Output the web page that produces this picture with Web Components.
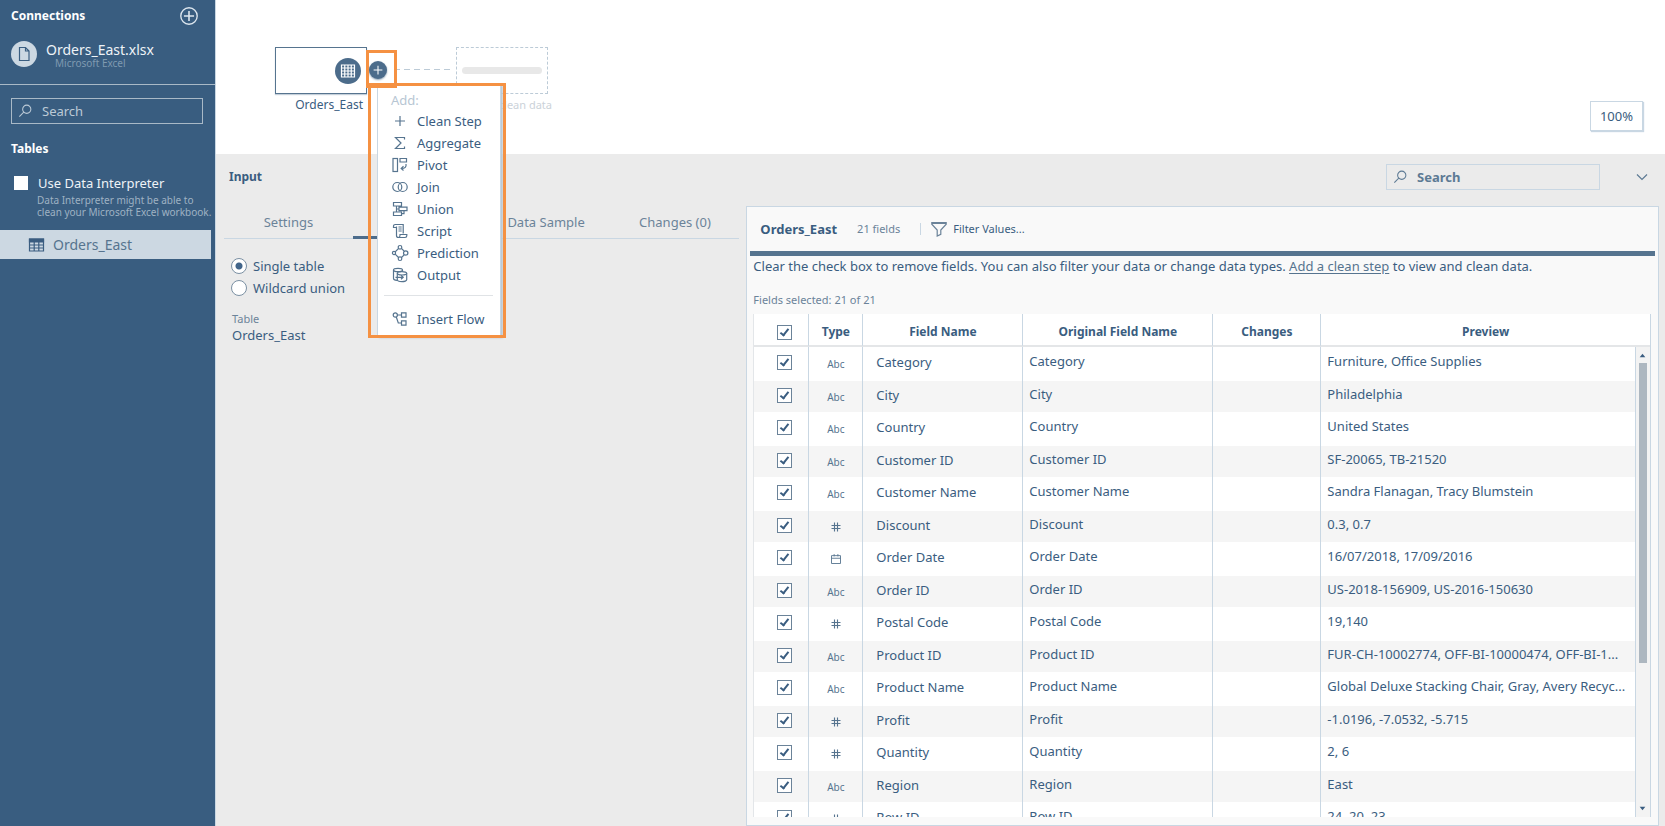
<!DOCTYPE html>
<html lang="en">
<head>
<meta charset="utf-8">
<title>Prep Builder - Orders_East</title>
<style>
  :root {
    --navy: #395d80;
    --ink: #3a5d80;
    --soft: #6b8399;
    --faint: #b7c6d3;
    --line: #c9d7e3;
    --pane: #ebebeb;
    --callout: #f59142;
  }
  html, body { height: 100%; }
  body {
    margin: 0;
    font: 13px/18px "Noto Sans", "Open Sans", sans-serif;
    color: var(--ink);
    overflow: hidden;
  }
</style>
</head>
<body>
<prep-app></prep-app>

<script>
const define = (name, html, setup) => {
  const template = document.createElement('template');
  template.innerHTML = html;
  customElements.define(name, class extends HTMLElement {
    constructor() {
      super();
      this.attachShadow({ mode: 'open' }).append(template.content.cloneNode(true));
    }
    connectedCallback() { if (setup) setup(this, this.shadowRoot); }
  });
};

const ICONS = {
  plus: '<path d="M8 3v10M3 8h10"/>',
  circlePlus: '<circle cx="8" cy="8" r="7.3"/><path d="M8 3.500v9M3.500 8h9" stroke-width="1.400"/>',
  sigma: '<path d="M12.500 4.500V2.500h-9L9 8l-5.500 5.500h9v-2"/>',
  pivot: '<rect x="1" y="1.500" width="4.500" height="13"/><path d="M8 1.500h6.500v3.500H8z"/><path d="M14 7c.6 3-1 4.500-4.500 4.500M11.500 9.300L9.200 11.500l2.300 2"/>',
  join: '<circle cx="5.300" cy="8" r="4.500"/><circle cx="10.700" cy="8" r="4.500"/>',
  union: '<path d="M1.500 1.500h8V5h-8zM7 6.200h8v3.500H7zM1.500 11h8v3.500h-8zM4.500 5v6M4.500 8H7M9.500 12.700H12v-3"/>',
  script: '<path d="M4.500 4.500H1.500v-1C1.500 2 2.300 1.500 3.200 1.500h8v9M4.500 3.500v9c0 1.300.8 2 1.800 2h6.700c1 0 1.800-.7 1.800-1.700v-1.300H8v1c0 1.200-.7 2-1.700 2M6.500 4h3.200M6.500 6h3.200M6.500 8h3.200"/>',
  prediction: '<circle cx="8" cy="2.300" r="1.800"/><circle cx="2" cy="8" r="1.600"/><circle cx="13.700" cy="8" r="2.200"/><circle cx="8" cy="13.700" r="1.800"/><path d="M6.500 3.500L3.200 6.800M9.500 3.500l2.700 2.700M3.200 9.200l3.300 3.300M12.200 9.800l-2.700 2.700"/>',
  output: '<ellipse cx="6" cy="3" rx="4.500" ry="1.700"/><path d="M1.500 3v8.500c0 .9 1.500 1.700 3.500 1.800M10.500 3v1.500"/><ellipse cx="10" cy="6.300" rx="4.700" ry="1.700"/><path d="M5.300 6.300v6.500c0 1 2 1.800 4.700 1.800s4.700-.8 4.700-1.800V6.300M3.500 10.300H11M9 8.300l2.200 2L9 12.300"/>',
  insert: '<circle cx="3.300" cy="4" r="2.100"/><path d="M9.500 1.800H14v4.400H9.500zM9.500 9.800H14v4.400H9.500zM5.500 4h4M4.300 6l2 6h3.200"/>',
  search: '<circle cx="10" cy="6" r="4.700"/><path d="M6.600 9.400L1.500 14.500"/>',
  file: '<path d="M3.500 1.500h6L13 5v9.500H3.500zM9.500 1.500V5H13"/>',
  grid: '<path d="M1.500 2h13v12h-13zM1.500 5h13M1.500 8h13M1.500 11h13M4.750 2v12M8 2v12M11.250 2v12"/>',
  sheet: '<path d="M1 2h14v12H1zM1 8h14M1 11h14M5.700 5v9M10.300 5v9"/><path d="M1 2h14v3H1z" fill="currentColor"/>',
  filter: '<path d="M.8 1.500h14.400v1.700L9.800 9v4.300L6.200 15V9L.8 3.200z"/><path d="M1 2.400h14"/>',
  chevron: '<path d="M3 5.500l5 5 5-5"/>',
  hash: '<path d="M6 2v12M10 2v12M2 6h12M2 10h12" stroke-width="1.500"/>',
  calendar: '<path d="M2 3.500h12V14H2zM2 7h12M5.500 1.500v3M10.500 1.500v3"/>',
  up: '<path d="M3 11l5-6 5 6z" fill="currentColor" stroke="none"/>',
  down: '<path d="M3 5l5 6 5-6z" fill="currentColor" stroke="none"/>'
};

define('prep-icon', `
  <style>
    :host { display: block; flex: none; width: 16px; height: 16px; }
    svg { display: block; width: 100%; height: 100%; overflow: visible; fill: none; stroke: currentColor; stroke-width: 1.2; }
  </style>
  <svg viewBox="0 0 16 16" aria-hidden="true"></svg>`,
  (host, root) => { root.querySelector('svg').innerHTML = ICONS[host.getAttribute('name')]; });

define('search-box', `
  <style>
    :host { display: flex; align-items: center; box-sizing: border-box; height: 26px; padding: 0 6px; gap: 10px; border: 1px solid var(--line); color: var(--soft); }
    prep-icon { width: 14px; height: 14px; }
    input { flex: 1; min-width: 0; border: 0; padding: 0; background: none; outline: 0; color: inherit; font: inherit; font-weight: inherit; }
    input::placeholder { color: inherit; opacity: 1; }
  </style>
  <prep-icon name="search"></prep-icon>
  <input type="search" placeholder="Search" aria-label="Search">`);

define('prep-sidebar', `
  <style>
    :host { display: flex; flex-direction: column; background: var(--navy); color: #fff; box-shadow: 1px 0 var(--line); z-index: 2; }
    h2 { margin: 0; font-size: 12px; line-height: 18px; }
    header { display: flex; align-items: center; justify-content: space-between; height: 32px; padding: 0 17px 0 11px; }
    button { border: 0; padding: 0; background: none; color: #dde6ee; }
    header prep-icon { width: 18px; height: 18px; }
    .source { display: flex; gap: 9px; height: 43px; margin-top: 9px; padding-left: 11px; border-bottom: 1px solid #a9b9c7; }
    .badge { display: grid; place-items: center; width: 26px; height: 26px; border-radius: 50%; background: #ccd8e2; color: var(--navy); }
    .name { padding-top: 1px; font-size: 14px; line-height: 16px; color: #eef3f7; }
    .kind { padding-left: 9px; font-size: 10px; line-height: 10px; color: #7f9ab0; }
    search-box { margin: 13px 12px 0 11px; border: 1px solid #a9b9c7; color: #bccad6; }
    .tables { margin: 16px 11px 0; }
    label { display: flex; align-items: center; gap: 10px; margin: 16px 0 0 14px; color: #eef3f7; }
    input { appearance: none; width: 14px; height: 14px; margin: 0; background: #fff; }
    p { margin: 2px 0 0 37px; font-size: 10px; line-height: 12px; color: #9fb2c3; white-space: nowrap; }
    a { display: flex; align-items: center; gap: 8px; height: 29px; margin: 12px 4px 0 0; padding-left: 28px; background: #ccd8e2; color: #56748f; text-decoration: none; font-size: 14px; }
    a prep-icon { width: 17px; height: 16px; color: var(--ink); }
  </style>
  <header><h2>Connections</h2><button aria-label="Add connection"><prep-icon name="circlePlus"></prep-icon></button></header>
  <div class="source">
    <div class="badge"><prep-icon name="file"></prep-icon></div>
    <div><div class="name">Orders_East.xlsx</div><div class="kind">Microsoft Excel</div></div>
  </div>
  <search-box></search-box>
  <h2 class="tables">Tables</h2>
  <label><input type="checkbox">Use Data Interpreter</label>
  <p>Data Interpreter might be able to<br>clean your Microsoft Excel workbook.</p>
  <a href="#orders"><prep-icon name="sheet"></prep-icon>Orders_East</a>`);

define('menu-item', `
  <style>
    :host { display: block; }
    button { display: flex; align-items: center; gap: 9px; width: 100%; height: 22px; padding: 0 0 0 14px; border: 0; background: none; color: var(--ink); font: inherit; white-space: nowrap; }
    prep-icon { color: #56748f; }
  </style>
  <button role="menuitem"><prep-icon></prep-icon><slot></slot></button>`,
  (host, root) => {
    const icon = document.createElement('prep-icon');
    icon.setAttribute('name', host.getAttribute('icon'));
    root.querySelector('prep-icon').replaceWith(icon);
  });
</script>
<script>
define('add-menu', `
  <style>
    :host { display: block; box-sizing: border-box; padding: 6px 0 6px; background: #fff; border: 1px solid var(--line); border-top: 0; box-shadow: 2px 1px 2px #b9c8d5; }
    .title { padding-left: 13px; line-height: 20px; color: var(--faint); }
    hr { margin: 9px 7px 12px 6px; border: 0; border-top: 1px solid #e0e3e6; }
  </style>
  <div class="title">Add:</div>
  <menu-item icon="plus">Clean Step</menu-item>
  <menu-item icon="sigma">Aggregate</menu-item>
  <menu-item icon="pivot">Pivot</menu-item>
  <menu-item icon="join">Join</menu-item>
  <menu-item icon="union">Union</menu-item>
  <menu-item icon="script">Script</menu-item>
  <menu-item icon="prediction">Prediction</menu-item>
  <menu-item icon="output">Output</menu-item>
  <hr>
  <menu-item icon="insert">Insert Flow</menu-item>`);

define('flow-canvas', `
  <style>
    :host { display: block; position: relative; z-index: 1; background: #fff; }
    .node, .label, .add, .link, add-menu, .callout, .zoom { position: absolute; box-sizing: border-box; }
    .node { top: 47px; width: 92px; height: 47px; display: flex; align-items: center; }
    .orders { left: 60px; border: 1px solid #56748f; justify-content: flex-end; padding-right: 5px; box-shadow: 0 1px 1px #c5d0da; }
    .disc { display: grid; place-items: center; width: 26px; height: 26px; border-radius: 50%; background: #4c6c8b; color: #fff; }
    .ghost { left: 241px; border: 1px dashed #bccbd7; padding: 0 5px; }
    .ghost i { flex: 1; height: 7px; border-radius: 4px; background: #e8e8e8; }
    .label { top: 96px; width: 100px; font-size: 12px; text-align: right; }
    .orders-label { left: 48px; }
    .ghost-label { left: 237px; font-size: 11px; color: #cbd2d9; }
    .add { left: 154px; top: 61px; width: 18px; height: 18px; border: 0; padding: 2px; border-radius: 50%; background: #4c6c8b; color: #fff; box-shadow: 0 1px 2px #8aa0b3; }
    .add prep-icon { width: 14px; height: 14px; }
    .link { left: 179px; top: 69px; width: 56px; height: 1px; background: repeating-linear-gradient(90deg, #bccbd7 0 6px, transparent 6px 10px); }
    add-menu { left: 162px; top: 84px; width: 124px; }
    .callout { border: 3px solid var(--callout); pointer-events: none; }
    .c1 { left: 151px; top: 50px; width: 31px; height: 38px; }
    .c2 { left: 153px; top: 83px; width: 138px; height: 255px; }
    .zoom { right: 22px; top: 101px; width: 53px; height: 30px; padding: 0; border: 1px solid var(--line); background: #fff; box-shadow: 1px 1px 1px #c9d7e3; color: var(--ink); font: inherit; }
  </style>
  <div class="node orders"><div class="disc"><prep-icon name="grid"></prep-icon></div></div>
  <div class="label orders-label">Orders_East</div>
  <div class="link"></div>
  <div class="node ghost"><i></i></div>
  <div class="label ghost-label">clean data</div>
  <button class="zoom">100%</button>
  <add-menu role="menu"></add-menu>
  <button class="add" aria-label="Add step"><prep-icon name="plus"></prep-icon></button>
  <div class="callout c2"></div>
  <div class="callout c1"></div>`);

define('input-settings', `
  <style>
    :host { display: block; }
    nav { display: grid; grid-template-columns: repeat(4, 1fr); height: 32px; border-bottom: 1px solid var(--line); }
    button { border: 0; padding: 0; background: none; color: var(--soft); font: inherit; line-height: 32px; }
    .active { margin-bottom: -1px; border-bottom: 3px solid #4c6c8b; }
    fieldset { margin: 16px 0 0 7px; padding: 0; border: 0; }
    label { display: flex; align-items: center; gap: 6px; height: 22px; }
    input { appearance: none; box-sizing: border-box; width: 16px; height: 16px; margin: 0; border: 1px solid #7b90a3; border-radius: 50%; background: #fff; }
    input:checked { background: radial-gradient(circle, #42658a 0 3px, #fff 4px); }
    dl { margin: 13px 0 0 8px; }
    dt { font-size: 11px; line-height: 14px; color: var(--soft); }
    dd { margin: 0; }
  </style>
  <nav role="tablist">
    <button role="tab">Settings</button>
    <button role="tab" class="active" aria-selected="true" aria-label="Tables"></button>
    <button role="tab">Data Sample</button>
    <button role="tab">Changes (0)</button>
  </nav>
  <fieldset>
    <label><input type="radio" name="mode" checked>Single table</label>
    <label><input type="radio" name="mode">Wildcard union</label>
  </fieldset>
  <dl><dt>Table</dt><dd>Orders_East</dd></dl>`);

const FIELDS = [
  ['Abc', 'Category', 'Furniture, Office Supplies'],
  ['Abc', 'City', 'Philadelphia'],
  ['Abc', 'Country', 'United States'],
  ['Abc', 'Customer ID', 'SF-20065, TB-21520'],
  ['Abc', 'Customer Name', 'Sandra Flanagan, Tracy Blumstein'],
  ['hash', 'Discount', '0.3, 0.7'],
  ['calendar', 'Order Date', '16/07/2018, 17/09/2016'],
  ['Abc', 'Order ID', 'US-2018-156909, US-2016-150630'],
  ['hash', 'Postal Code', '19,140'],
  ['Abc', 'Product ID', 'FUR-CH-10002774, OFF-BI-10000474, OFF-BI-1...'],
  ['Abc', 'Product Name', 'Global Deluxe Stacking Chair, Gray, Avery Recyc...'],
  ['hash', 'Profit', '-1.0196, -7.0532, -5.715'],
  ['hash', 'Quantity', '2, 6'],
  ['Abc', 'Region', 'East'],
  ['hash', 'Row ID', '24, 20, 23']
];

define('field-table', `
  <style>
    :host { display: grid; grid-template: minmax(0, 1fr) / minmax(0, 1fr); overflow: hidden; background: #fff; border-right: 1px solid var(--line); }
    table, .bar { grid-area: 1 / 1; }
    table { align-self: start; width: 100%; table-layout: fixed; border-collapse: separate; border-spacing: 0; }
    th, td { box-sizing: border-box; padding: 0; border-left: 1px solid var(--line); overflow: hidden; white-space: nowrap; }
    th:first-child, td:first-child { border-left-color: #e3e6e9; }
    th { height: 33px; padding-top: 4px; border-bottom: 2px solid #e4e6e8; font-size: 12px; }
    td { height: 34px; padding-bottom: 4px; }
    tr:nth-child(even) td { height: 31px; background: #f5f5f5; }
    .check { padding-left: 6px; text-align: center; }
    td.check { padding-bottom: 6px; }
    .type { padding-bottom: 0; font-size: 10px; color: #56748f; }
    .type prep-icon { width: 12px; height: 12px; margin: 0 auto; }
    .name { padding-left: 13px; }
    .origin, .preview { padding-left: 6px; padding-bottom: 6px; }
    input { appearance: none; display: inline-grid; place-items: center; box-sizing: border-box; width: 15px; height: 15px; margin: 0; border: 1px solid #6b8399; background: #fff; vertical-align: middle; }
    input:checked::before { content: ""; width: 3px; height: 7px; margin-bottom: 2px; border: solid #3a5d80; border-width: 0 2px 2px 0; transform: rotate(38deg); }
    .bar { justify-self: end; display: flex; flex-direction: column; align-items: center; justify-content: space-between; width: 15px; margin-top: 33px; padding: 4px 0; box-sizing: border-box; border-left: 1px solid var(--line); background: #f3f3f3; color: var(--ink); }
    .bar prep-icon { width: 9px; height: 9px; }
    .thumb { width: 8px; flex: 0 1 65%; margin: 3px 0 auto; background: #adb7c0; }
  </style>
  <table>
    <colgroup><col style="width:55px"><col style="width:54px"><col style="width:160px"><col style="width:190px"><col style="width:108px"><col></colgroup>
    <thead><tr>
      <th class="check"><input type="checkbox" checked aria-label="Select all fields"></th>
      <th>Type</th><th>Field Name</th><th>Original Field Name</th><th>Changes</th><th>Preview</th>
    </tr></thead>
    <tbody></tbody>
  </table>
  <div class="bar"><prep-icon name="up"></prep-icon><div class="thumb"></div><prep-icon name="down"></prep-icon></div>`,
  (host, root) => {
    root.querySelector('tbody').innerHTML = FIELDS.map(([type, name, preview]) => `
      <tr>
        <td class="check"><input type="checkbox" checked aria-label="${name}"></td>
        <td class="type" align="center">${type === 'Abc' ? type : `<prep-icon name="${type}"></prep-icon>`}</td>
        <td class="name">${name}</td>
        <td class="origin">${name}</td>
        <td></td>
        <td class="preview">${preview}</td>
      </tr>`).join('');
  });

define('fields-panel', `
  <style>
    :host { display: flex; flex-direction: column; box-sizing: border-box; background: #f9f9f9; border: 1px solid var(--line); padding: 0 3px; }
    header { display: flex; align-items: center; height: 44px; padding-left: 10px; border-bottom: 5px solid #56748f; }
    h3 { margin: 0 20px 0 0; font-size: 13px; }
    .count { font-size: 11px; color: var(--soft); }
    button { display: flex; align-items: center; gap: 6px; margin-left: 20px; padding: 0 0 0 10px; height: 12px; border: 0; border-left: 1px solid var(--line); background: none; color: var(--ink); font: inherit; font-size: 11px; }
    button prep-icon { color: var(--soft); }
    p { margin: 1px 0 0 3px; }
    a { color: #56748f; text-underline-offset: 2px; }
    .selected { margin: 16px 0 0 3px; font-size: 11px; color: var(--soft); }
    field-table { flex: 1; min-height: 0; margin: 5px 4px 8px 3px; }
  </style>
  <header><h3>Orders_East</h3><span class="count">21 fields</span><button><prep-icon name="filter"></prep-icon>Filter Values...</button></header>
  <p>Clear the check box to remove fields. You can also filter your data or change data types. <a href="#clean">Add a clean step</a> to view and clean data.</p>
  <div class="selected">Fields selected: 21 of 21</div>
  <field-table></field-table>`);

define('input-pane', `
  <style>
    :host { display: flex; flex-direction: column; min-height: 0; background: var(--pane); }
    header { display: flex; align-items: center; height: 46px; padding: 0 15px 0 14px; }
    h2 { margin: 0 auto 0 0; font-size: 12px; line-height: 18px; }
    search-box { width: 214px; font-weight: bold; --soft: #5d7a94; }
    button { margin-left: 34px; padding: 0; border: 0; background: none; color: #5d7a94; }
    .body { flex: 1; min-height: 0; display: grid; grid-template: minmax(0, 1fr) / 515fr 912fr; gap: 7px; padding: 6px 6px 0 9px; }
  </style>
  <header><h2>Input</h2><search-box></search-box><button aria-label="Collapse"><prep-icon name="chevron"></prep-icon></button></header>
  <div class="body"><input-settings></input-settings><fields-panel></fields-panel></div>`);

define('prep-app', `
  <style>
    :host { display: grid; grid-template: 154px minmax(0, 1fr) / 215px minmax(0, 1fr); height: 100vh; }
    prep-sidebar { grid-row: 1 / 3; }
  </style>
  <prep-sidebar></prep-sidebar>
  <flow-canvas></flow-canvas>
  <input-pane></input-pane>`);
</script>
</body>
</html>
